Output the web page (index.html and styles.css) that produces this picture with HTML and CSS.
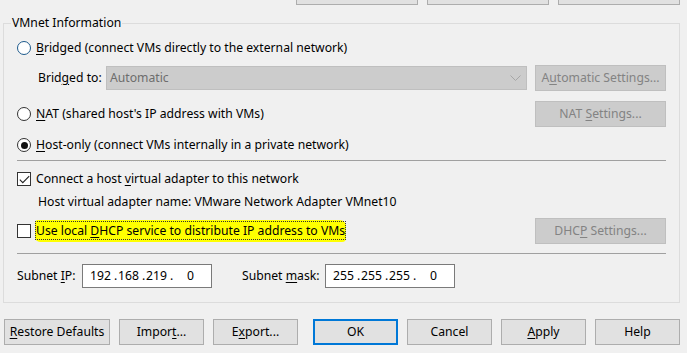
FILE: index.html
```html
<!DOCTYPE html>
<html lang="en">
<head>
<meta charset="UTF-8">
<meta name="viewport" content="width=device-width, initial-scale=1.0">
<title>Virtual Network Editor</title>
<link rel="stylesheet" href="styles.css">
</head>
<body>
<div class="top-buttons">
    <button class="btn top-btn"></button>
    <button class="btn top-btn"></button>
    <button class="btn top-btn"></button>
</div>

<fieldset class="group">
    <legend>VMnet Information</legend>

    <div class="row row-bridged">
        <span class="radio radio-hover"></span>
        <span class="label"><u>B</u>ridged (connect VMs directly to the external network)</span>
    </div>

    <div class="row row-split row-bridged-to">
        <div class="left">
            <span class="label indent bridged-label">Brid<u>g</u>ed to:</span>
            <div class="combo">
                <span>Automatic</span>
                <svg class="chevron" width="11" height="6" viewBox="0 0 11 6"><path d="M0.5 0.5 L5.5 5.5 L10.5 0.5" fill="none" stroke="#a6a6a6" stroke-width="1"/></svg>
            </div>
        </div>
        <button class="btn side-btn" disabled>A<u>u</u>tomatic Settings...</button>
    </div>

    <div class="row row-split row-nat">
        <div class="left">
            <span class="radio"></span>
            <span class="label"><u>N</u>AT (shared host's IP address with VMs)</span>
        </div>
        <button class="btn side-btn" disabled>NAT <u>S</u>ettings...</button>
    </div>

    <div class="row row-host">
        <span class="radio checked"></span>
        <span class="label"><u>H</u>ost-only (connect VMs internally in a private network)</span>
    </div>

    <div class="separator sep-first"></div>

    <div class="row row-connect">
        <span class="check">
            <svg width="11" height="9" viewBox="0 0 11 9"><path d="M0.8 4.6 L3.8 7.6 L10.2 1.2" fill="none" stroke="#222" stroke-width="1.1"/></svg>
        </span>
        <span class="label">Connect a host <u>v</u>irtual adapter to this network</span>
    </div>

    <div class="row row-adapter">
        <span class="label indent">Host virtual adapter name: VMware Network Adapter VMnet10</span>
    </div>

    <div class="row row-split row-dhcp">
        <div class="left">
            <span class="check"></span>
            <span class="marker"><span class="focus">Use local <u>D</u>HCP service to distribute IP address to VMs</span></span>
        </div>
        <button class="btn side-btn" disabled>DHC<u>P</u> Settings...</button>
    </div>

    <div class="separator sep-second"></div>

    <div class="row row-subnet">
        <span class="label ip-label">Subnet <u>I</u>P:</span>
        <span class="ip-box">
            <span class="oct">192</span><span class="dot">.</span><span class="oct">168</span><span class="dot">.</span><span class="oct">219</span><span class="dot">.</span><span class="oct last">0</span>
        </span>
        <span class="label mask-label">Subnet <u>m</u>ask:</span>
        <span class="ip-box">
            <span class="oct">255</span><span class="dot">.</span><span class="oct">255</span><span class="dot">.</span><span class="oct">255</span><span class="dot">.</span><span class="oct last">0</span>
        </span>
    </div>
</fieldset>

<div class="bottom-buttons">
    <button class="btn wide"><u>R</u>estore Defaults</button>
    <button class="btn">Impor<u>t</u>...</button>
    <button class="btn">E<u>x</u>port...</button>
    <button class="btn default">OK</button>
    <button class="btn">Cancel</button>
    <button class="btn"><u>A</u>pply</button>
    <button class="btn">Help</button>
</div>
</body>
</html>
```

FILE: styles.css
```css
body {
    margin: 0;
    padding: 0;
    background-color: #f0f0f0;
    font-family: "Segoe UI", "Noto Sans", sans-serif;
    font-size: 12.2px;
    line-height: 16px;
    color: #000;
    overflow: hidden;
}

u {
    text-decoration-thickness: 1px;
    text-underline-offset: 2px;
}

.btn {
    font-family: inherit;
    font-size: 12.2px;
    line-height: 16px;
    height: 26px;
    width: 85px;
    padding: 0;
    margin: 0;
    background-color: #e1e1e1;
    border: 1px solid #adadad;
    color: #000;
    box-sizing: border-box;
}

.btn:disabled {
    background-color: #cccccc;
    border-color: #bfbfbf;
    color: #838383;
}

.top-buttons {
    height: 5px;
    overflow: hidden;
    display: flex;
    justify-content: flex-end;
    align-items: flex-end;
    gap: 9px;
    padding-right: 7px;
}

.top-btn {
    width: 122px;
    flex: none;
}

.group {
    margin: 10px 7px 0 3px;
    padding: 7px 13px 14px 13px;
    border: 1px solid #dcdcdc;
    min-width: 0;
}

.group legend {
    padding: 0 1px;
    margin-left: -6px;
    line-height: 16px;
}

.row {
    display: flex;
    align-items: center;
    height: 20px;
}

.row-split {
    justify-content: space-between;
    height: 26px;
}

.row-split .left {
    display: flex;
    align-items: center;
}

.side-btn {
    width: 131px;
}

.row-bridged-to { margin-top: 7px; }
.row-nat { margin-top: 10px; }
.row-host { margin-top: 8px; }
.row-connect { margin-top: 8px; }
.row-adapter { margin-top: 3px; }
.row-dhcp { margin-top: 6px; }
.row-subnet { margin-top: 10px; height: 24px; }

.indent {
    margin-left: 21px;
}

.bridged-label {
    width: 68px;
}

.radio {
    width: 14px;
    height: 14px;
    border: 1px solid #333;
    border-radius: 50%;
    box-sizing: border-box;
    background: #fff;
    margin-right: 5px;
    flex: none;
    position: relative;
}

.radio-hover {
    border-color: #1d5a8c;
}

.radio.checked::after {
    content: "";
    position: absolute;
    left: 2.5px;
    top: 2.5px;
    width: 7px;
    height: 7px;
    border-radius: 50%;
    background: #111;
}

.check {
    width: 14px;
    height: 14px;
    border: 1px solid #333;
    box-sizing: border-box;
    background: #fff;
    margin-right: 5px;
    flex: none;
    display: flex;
    align-items: center;
    justify-content: center;
}

.combo {
    width: 421px;
    height: 24px;
    box-sizing: border-box;
    background-color: #cccccc;
    border: 1px solid #bfbfbf;
    color: #6d6d6d;
    display: flex;
    align-items: center;
    justify-content: space-between;
    padding: 0 5px 0 3px;
}

.marker {
    background-color: #ffff00;
    padding: 3px 1px;
    margin-left: -1px;
    border-radius: 3px 6px 4px 5px;
}

.focus {
    outline: 1px dotted #333;
    outline-offset: 0;
}

.separator {
    height: 1px;
    background-color: #a0a0a0;
}

.sep-first { margin-top: 5px; }
.sep-second { margin-top: 9px; }

.ip-label {
    width: 65px;
}

.ip-box {
    width: 130px;
    height: 24px;
    box-sizing: border-box;
    background: #fff;
    border: 1px solid #7a7a7a;
    padding-left: 7px;
    display: flex;
    align-items: center;
}

.oct {
    width: 25px;
}

.oct.last {
    padding-left: 13px;
}

.dot {
    width: 4px;
}

.mask-label {
    margin-left: 30px;
    width: 83px;
}

.bottom-buttons {
    display: flex;
    gap: 9px;
    margin: 16px 0 0 4px;
}

.bottom-buttons .wide {
    width: 106px;
}

.bottom-buttons .default {
    margin-left: 6px;
    border: 2px solid #0078d7;
}
```
